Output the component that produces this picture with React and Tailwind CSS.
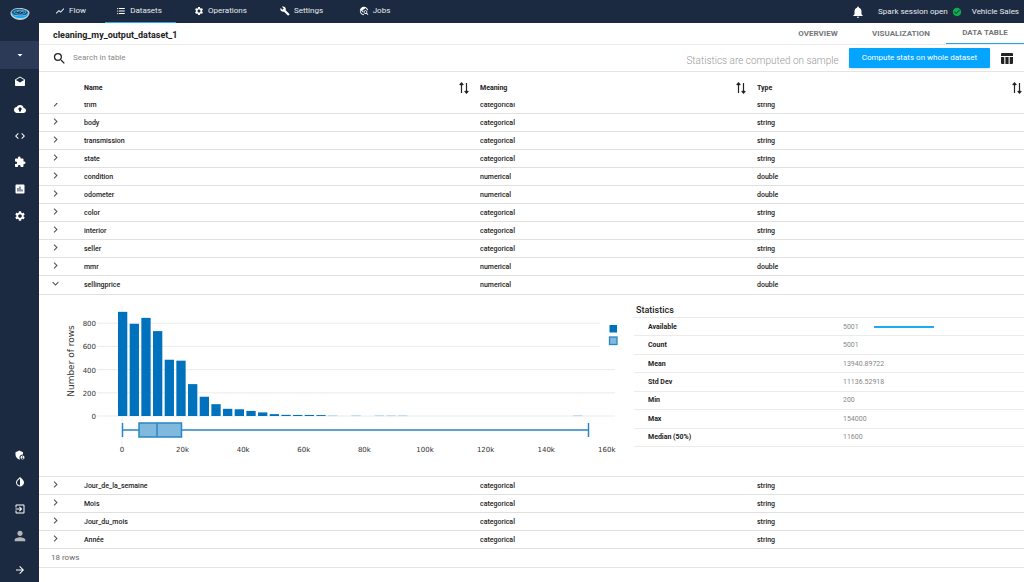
import React, { useLayoutEffect, useRef, useState } from 'react';
import {
  MdAdminPanelSettings, MdArrowDropDown, MdArrowForward, MdBackup, MdBuild, MdCheckCircle, MdChevronRight,
  MdCode, MdDrafts, MdExitToApp, MdExpandMore, MdExtension, MdFormatListBulleted, MdInsertChart,
  MdInvertColors, MdNotifications, MdPerson, MdSearch, MdSettings, MdShowChart, MdTravelExplore,
} from 'react-icons/md';

const NAV = [
  { label: 'Flow', icon: MdShowChart, width: 'w-[66px]' },
  { label: 'Datasets', icon: MdFormatListBulleted, width: 'w-[71px]' },
  { label: 'Operations', icon: MdSettings, width: 'w-[92px]' },
  { label: 'Settings', icon: MdBuild, width: 'w-[70px]' },
  { label: 'Jobs', icon: MdTravelExplore, width: 'w-[76px]' },
];

const SIDE_TOP = [
  { label: 'Inbox', icon: MdDrafts },
  { label: 'Import', icon: MdBackup },
  { label: 'Code', icon: MdCode },
  { label: 'Plugins', icon: MdExtension },
  { label: 'Reports', icon: MdInsertChart },
  { label: 'Project settings', icon: MdSettings },
];

const SIDE_BOTTOM = [
  { label: 'Administration', icon: MdAdminPanelSettings },
  { label: 'Theme', icon: MdInvertColors },
  { label: 'Log out', icon: MdExitToApp },
  { label: 'Account', icon: MdPerson, color: 'text-[#b5b5b5]', size: 'w-4 h-4' },
];

const TOTAL_ROWS = 18;

// loaded window of the column list
const COLUMNS = [
  ['trim', 'categorical', 'string'],
  ['body', 'categorical', 'string'],
  ['transmission', 'categorical', 'string'],
  ['state', 'categorical', 'string'],
  ['condition', 'numerical', 'double'],
  ['odometer', 'numerical', 'double'],
  ['color', 'categorical', 'string'],
  ['interior', 'categorical', 'string'],
  ['seller', 'categorical', 'string'],
  ['mmr', 'numerical', 'double'],
  ['sellingprice', 'numerical', 'double'],
  ['Jour_de_la_semaine', 'categorical', 'string'],
  ['Mois', 'categorical', 'string'],
  ['Jour_du_mois', 'categorical', 'string'],
  ['Année', 'categorical', 'string'],
];

const STATS = [
  ['Available', '5001'],
  ['Count', '5001'],
  ['Mean', '13940.89722'],
  ['Std Dev', '11136.52918'],
  ['Min', '200'],
  ['Max', '154000'],
  ['Median (50%)', '11600'],
];

// rows per bin, [bin index, count]
const BINS = [
  [0, 898], [1, 795], [2, 846], [3, 732], [4, 485], [5, 477], [6, 275], [7, 166], [8, 102],
  [9, 62], [10, 58], [11, 44], [12, 31], [13, 16], [14, 10], [15, 9], [16, 9], [17, 8],
];
const RARE_BINS = [18, 20, 22, 23, 24, 39];

const Logo = () => (
  <svg className="w-5 h-[14px]" viewBox="0 0 40 28" aria-hidden="true">
    <path d="M1 11C3 3 14 1 22 2c10 1 18 5 17 10-1 8-9 14-19 14C9 25 0 19 1 11z" fill="#c3d0da" />
    <path d="M3 10C6 4 14 3 22 4c8 1 14 4 14 7 0 4-7 7-16 6C10 17 3 15 3 10z" fill="#1d5f8c" />
    <path d="M3 12c3 5 10 6 17 6s14-1 17-6c-1 7-9 11-17 10C11 22 4 18 3 12z" fill="#12aef0" />
    <path d="M8 10c4-4 18-5 24 0-5 6-18 6-24 0z" fill="#0f3350" stroke="#2fb4ee" strokeWidth="2" />
    <path d="M13 10l4-2 3 3 4-3 4 3" fill="none" stroke="#a9cfe4" strokeWidth="1.500" />
  </svg>
);

const SortIcon = () => (
  <svg className="w-[10px] h-3" viewBox="0 0 10 12" fill="none" stroke="#222" aria-hidden="true">
    <path d="M2.500 11V1M0.700 3l1.800-2 1.800 2M7.500 1v10M5.700 9l1.800 2 1.800-2" strokeWidth="1.200" />
  </svg>
);

const ColumnsIcon = () => (
  <svg className="w-3 h-[11px]" viewBox="0 0 12 11" fill="#222" aria-hidden="true">
    <path d="M1 0h10a1 1 0 0 1 1 1v2H0V1a1 1 0 0 1 1-1zM0 4h3.300v7H1a1 1 0 0 1-1-1zM4.400 4h3.200v7H4.400zM8.700 4H12v6a1 1 0 0 1-1 1H8.700z" />
  </svg>
);

const Histogram = () => {
  const x = (v) => 83 + v * 3.03;
  const y = (v) => 122 - v * 0.116;
  return (
    <svg className="shrink-0 w-[593px] h-[181px]" viewBox="0 1 593 181" role="img" aria-label="Distribution of sellingprice">
      <path d="M83 12v140" stroke="#f0f0f0" />
      {[0, 200, 400, 600, 800].map((v) => (
        <g key={v}>
          <path d={`M58 ${y(v)}H${v > 400 ? 561 : 576}`} stroke="#ebebeb" />
          <text x="57" y={y(v) + 3} textAnchor="end" className="text-[7px] fill-[#333]">{v}</text>
        </g>
      ))}
      {BINS.map(([i, count]) => (
        <rect key={i} x={79 + i * 11.67} y={y(count)} width="9.300" height={count * 0.116} fill="#0072bd" />
      ))}
      {RARE_BINS.map((i) => (
        <rect key={i} x={79 + i * 11.67} y="121" width="9.300" height="1.200" fill="#c5dcec" />
      ))}
      <g stroke="#2a86c5" strokeWidth="1.500" fill="none">
        <path d="M83.500 136H100M143 136H550M83.500 129v14M549.500 129v14" />
        <rect x="100" y="129" width="42.500" height="14" fill="#80b8de" />
        <path d="M118 129v14" />
      </g>
      {[0, 20, 40, 60, 80, 100, 120, 140, 160].map((v) => (
        <text key={v} x={x(v)} y="158" textAnchor="middle" className="text-[7px] fill-[#333]">{v ? `${v}k` : 0}</text>
      ))}
      <text transform="translate(35 67) rotate(-90)" textAnchor="middle" className="text-[9px] fill-[#333]">Number of rows</text>
      <rect x="570.500" y="31" width="7.500" height="7.500" fill="#0072bd" />
      <rect x="570.500" y="43" width="7.500" height="7.500" fill="#80b8de" stroke="#2a86c5" strokeWidth="1.300" />
    </svg>
  );
};

const Statistics = () => (
  <div className="ml-[2px] flex-1 pt-2">
    <h3 className="pl-[2px] h-[14px] text-[9px] leading-[14px] font-medium text-[#222]">Statistics</h3>
    <table className="w-full h-[130px] table-fixed border-collapse">
      <tbody>
        {STATS.map(([label, value]) => (
          <tr key={label} className="border-y border-[#ebebeb]">
            <th scope="row" className="w-1/2 pl-[14px] text-left font-bold text-[#222]">{label}</th>
            <td className="pl-[14px] text-[#888]">
              <div className="flex items-center">
                <span className="w-[31px]">{value}</span>
                {label === 'Available' && <span className="w-[60px] h-[2px] bg-[#1caaf5]" />}
              </div>
            </td>
          </tr>
        ))}
      </tbody>
    </table>
  </div>
);

const SideButton = ({ label, icon: Icon, color = 'text-white', size = 'w-3 h-3' }) => (
  <button aria-label={label} className={`flex w-full flex-1 items-center justify-center ${color}`}>
    <Icon className={size} />
  </button>
);

const App = () => {
  const [open, setOpen] = useState('sellingprice');
  const [search, setSearch] = useState('');
  const scroller = useRef(null);

  useLayoutEffect(() => {
    scroller.current.scrollTop = scroller.current.scrollHeight;
  }, []);

  const toggle = (name) => setOpen(open === name ? null : name);

  return (
    <div className="flex h-screen overflow-hidden bg-white font-['Roboto',sans-serif] text-[#222]">
      <aside className="flex w-[39px] shrink-0 flex-col bg-[#1b2a41]">
        <div className="flex h-[41px] justify-center pt-[7px]"><Logo /></div>
        <button aria-label="Select project" className="flex h-7 items-center justify-center bg-[#2c3a58] text-white">
          <MdArrowDropDown className="w-3 h-3" />
        </button>
        <nav className="flex h-40 flex-col">{SIDE_TOP.map((s) => <SideButton key={s.label} {...s} />)}</nav>
        <nav className="mt-auto flex h-[108px] flex-col">{SIDE_BOTTOM.map((s) => <SideButton key={s.label} {...s} />)}</nav>
        <div className="mt-2 flex h-[25px]"><SideButton label="Expand menu" icon={MdArrowForward} /></div>
      </aside>

      <div className="flex min-w-0 flex-1 flex-col">
        <header className="flex h-[23px] shrink-0 justify-between bg-[#1b2a41] text-[8px] text-[#e8eaee]">
          <nav className="flex">
            {NAV.map(({ label, icon: Icon, width }) => (
              <a key={label} href="#" className={`flex items-center justify-center gap-1 pr-[3px] pb-px border-b ${width} ${label === 'Datasets' ? 'border-[#29abe2]' : 'border-transparent'}`}>
                <Icon className="w-[10px] h-[10px] text-white" />
                {label}
              </a>
            ))}
          </nav>
          <div className="flex items-center pr-[5px]">
            <button aria-label="Notifications" className="mr-[13px]"><MdNotifications className="w-[14px] h-[14px] text-white" /></button>
            <span>Spark session open</span>
            <MdCheckCircle className="ml-1 mr-[10px] w-[10px] h-[10px] text-[#0bb04b]" />
            <span>Vehicle Sales</span>
          </div>
        </header>

        <div className="flex h-[22px] shrink-0 items-stretch justify-between border-b border-[#ebebeb]">
          <h1 className="pl-[14px] pt-px text-[9px] leading-[23px] font-bold">cleaning_my_output_dataset_1</h1>
          <nav className="flex text-[8px] font-bold text-[#777]">
            <a href="#" className="flex w-[76px] items-center justify-center">OVERVIEW</a>
            <a href="#" className="flex w-[90px] items-center justify-center">VISUALIZATION</a>
            <a href="#" className="flex w-[78px] items-center justify-center border-b border-[#1caaf5]">DATA TABLE</a>
          </nav>
        </div>

        <div className="flex h-[27px] shrink-0 items-center border-b border-[#e4e4e4] pr-[11px] pl-[13px]">
          <MdSearch className="w-[15px] h-[15px]" />
          <input
            aria-label="Search in table"
            placeholder="Search in table"
            value={search}
            onChange={(e) => setSearch(e.target.value)}
            className="ml-[6px] flex-1 text-[8px] outline-none placeholder:text-[#888]"
          />
          <span className="pt-1 text-[10px] font-light text-[#999]">Statistics are computed on sample</span>
          <button className="ml-[10px] h-5 rounded-[1px] bg-[#05a5ff] px-[13px] text-[8px] text-white shadow-sm">Compute stats on whole dataset</button>
          <button aria-label="Choose columns" className="ml-[11px]"><ColumnsIcon /></button>
        </div>

        <div ref={scroller} className="min-h-0 flex-1 overflow-y-auto [scrollbar-width:none]">
          <table className="w-full table-fixed border-separate border-spacing-0 text-[7px] leading-[10px]">
            <thead>
              <tr className="h-[31px] text-left">
                <th className="sticky top-0 z-10 w-[45px] bg-white" aria-label="Details" />
                {[['Name', 'w-[396px]'], ['Meaning', 'w-[277px]'], ['Type', '']].map(([label, width]) => (
                  <th key={label} className={`sticky top-0 z-10 bg-white font-bold ${width}`}>
                    <div className="flex items-center justify-between">
                      {label}
                      <button aria-label={`Sort by ${label}`} className={label === 'Type' ? 'pr-[2px]' : 'pr-[11px]'}><SortIcon /></button>
                    </div>
                  </th>
                ))}
              </tr>
            </thead>
            <tbody className="font-medium">
              {COLUMNS.filter(([name]) => name.includes(search)).map(([name, meaning, type]) => (
                <React.Fragment key={name}>
                  <tr className={`*:border-b *:border-[#e0e0e0] ${open === name ? 'h-[19px]' : 'h-[18px]'}`}>
                    <td className="pl-[10px] align-top">
                      <button onClick={() => toggle(name)} aria-label={`Details of ${name}`} className="block pt-px text-[#555]">
                        {open === name ? <MdExpandMore className="w-[13px] h-[13px]" /> : <MdChevronRight className="w-[13px] h-[13px]" />}
                      </button>
                    </td>
                    <td>{name}</td>
                    <td>{meaning}</td>
                    <td>{type}</td>
                  </tr>
                  {open === name && (
                    <tr>
                      <td colSpan={4} className="border-b border-[#e4e4e4] font-normal">
                        <div className="flex">
                          <div className="font-['DejaVu_Sans',sans-serif]"><Histogram /></div>
                          <Statistics />
                        </div>
                      </td>
                    </tr>
                  )}
                </React.Fragment>
              ))}
            </tbody>
          </table>
        </div>

        <footer className="mb-[14px] h-[19px] shrink-0 border-b border-[#e4e4e4] pl-3 text-[8px] leading-[18px] text-[#666]">
          {TOTAL_ROWS} rows
        </footer>
      </div>
    </div>
  );
};

export default App;
